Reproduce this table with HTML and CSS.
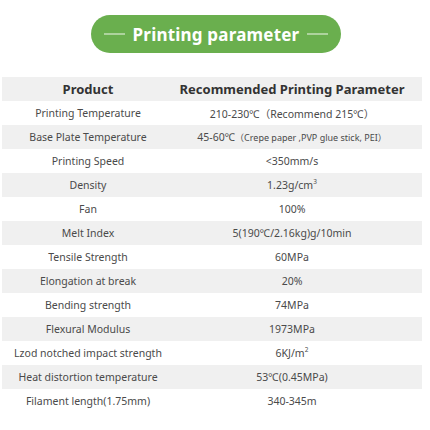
FILE: index.html
```html
<!DOCTYPE html>
<html>
<head>
<meta charset="utf-8">
<link rel="stylesheet" href="styles.css">
</head>
<body>
<div class="page">
  <div class="banner">
    <span class="dash"></span>
    <span class="banner-title">Printing parameter</span>
    <span class="dash"></span>
  </div>
  <div class="table">
    <div class="row head"><div class="c1">Product</div><div class="c2">Recommended Printing Parameter</div></div>
    <div class="row"><div class="c1">Printing Temperature</div><div class="c2">210-230℃（Recommend 215℃）</div></div>
    <div class="row alt"><div class="c1">Base Plate Temperature</div><div class="c2"><span>45-60℃</span><span class="small">（Crepe paper ,PVP glue stick, PEI）</span></div></div>
    <div class="row"><div class="c1">Printing Speed</div><div class="c2">&lt;350mm/s</div></div>
    <div class="row alt"><div class="c1">Density</div><div class="c2">1.23g/cm<sup>3</sup></div></div>
    <div class="row"><div class="c1">Fan</div><div class="c2">100%</div></div>
    <div class="row alt"><div class="c1">Melt Index</div><div class="c2">5(190℃/2.16kg)g/10min</div></div>
    <div class="row"><div class="c1">Tensile Strength</div><div class="c2">60MPa</div></div>
    <div class="row alt"><div class="c1">Elongation at break</div><div class="c2">20%</div></div>
    <div class="row"><div class="c1">Bending strength</div><div class="c2">74MPa</div></div>
    <div class="row alt"><div class="c1">Flexural Modulus</div><div class="c2">1973MPa</div></div>
    <div class="row"><div class="c1">Lzod notched impact strength</div><div class="c2">6KJ/m<sup>2</sup></div></div>
    <div class="row alt"><div class="c1">Heat distortion temperature</div><div class="c2">53℃(0.45MPa)</div></div>
    <div class="row"><div class="c1">Filament length(1.75mm)</div><div class="c2">340-345m</div></div>
  </div>
</div>
</body>
</html>
```

FILE: styles.css
```css
* { box-sizing: border-box; }
html, body { margin: 0; padding: 0; background: #ffffff; }
body {
  font-family: "Noto Sans", "Noto Sans CJK SC", sans-serif;
  color: #4a4a4a;
}
.page {
  width: 430px;
  height: 430px;
  padding-top: 15px;
  overflow: hidden;
}
.banner {
  width: 250px;
  height: 38px;
  margin: 0 auto 0 91px;
  background: #6aaf4e;
  border-radius: 19px;
  display: flex;
  align-items: center;
  justify-content: center;
  gap: 8px;
}
.dash {
  width: 21px;
  height: 1.5px;
  background: rgba(255, 255, 255, 0.45);
}
.banner-title {
  color: #ffffff;
  font-weight: 700;
  font-size: 17px;
  line-height: 1;
  letter-spacing: 0.2px;
}
.table {
  margin-top: 24px;
  margin-left: 2px;
  width: 420px;
}
.row {
  display: grid;
  grid-template-columns: 172px 1fr;
  height: 24px;
  align-items: center;
  font-size: 10.5px;
}
.row.alt, .row.head { background: #f0f0f0; }
.c1 { text-align: center; white-space: nowrap; }
.c2 { text-align: center; white-space: nowrap; padding-right: 12px; }
.head { font-size: 13px; font-weight: 700; color: #333333; }
.small { font-size: 9px; }
sup { font-size: 6.5px; vertical-align: 5px; line-height: 0; }
```
